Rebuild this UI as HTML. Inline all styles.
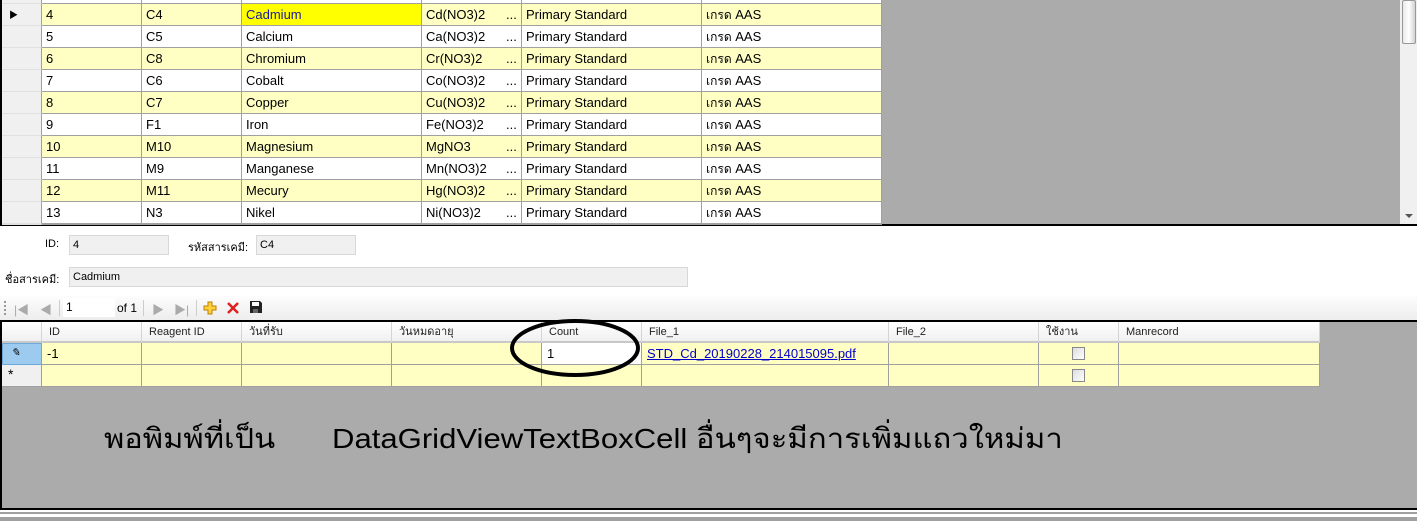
<!DOCTYPE html>
<html><head><meta charset="utf-8"><style>
*{margin:0;padding:0;box-sizing:border-box}
body{width:1417px;height:521px;position:relative;overflow:hidden;background:#fff;font-family:"Liberation Sans","Noto Sans CJK SC",sans-serif;font-size:13px;color:#000}
.a{position:absolute}
.c{position:absolute;border-right:1px solid #a0a0a0;border-bottom:1px solid #a0a0a0;padding-left:4px;line-height:21px;white-space:nowrap;overflow:hidden}
.y{background:#ffffc4}.w{background:#fff}
.rh{position:absolute;left:2px;width:40px;background:#f0f0f0;border-right:1px solid #a0a0a0;border-bottom:1px solid #e0e0e0}
.h{position:absolute;top:322px;height:21px;background:linear-gradient(#fff,#f0f0f0);border-right:1px solid #d5d5d5;border-bottom:2px solid #c8c8c8;font-size:11px;padding-left:7px;line-height:20px;color:#222}
.tb{position:absolute;background:#f0f0f0;border:1px solid #d8d8d8;height:20px;font-size:11px;padding:0 3px;line-height:18px}
.lb{position:absolute;font-size:11px}
.th{font-size:12px}
</style></head><body>
<div class="a" style="left:0;top:0;width:1417px;height:226px;background:#ababab;border-left:2px solid #000;border-bottom:2px solid #000"></div>
<div id="tg"></div>
<div class="a" style="left:1400px;top:0;width:17px;height:224px;background:#f0f0f0"></div>
<div class="a" style="left:1402px;top:0;width:14px;height:44px;background:linear-gradient(90deg,#e8e8e8,#fff,#d0d0d0);border:1px solid #999;border-radius:2px"></div>
<div class="a" style="left:1405px;top:214px;width:0;height:0;border-left:4px solid transparent;border-right:4px solid transparent;border-top:4px solid #555"></div>

<div class="lb" style="left:45px;top:238px">ID:</div>
<div class="tb" style="left:69px;top:235px;width:100px">4</div>
<div class="lb" style="left:188px;top:238px">รหัสสารเคมี:</div>
<div class="tb" style="left:256px;top:235px;width:100px">C4</div>
<div class="lb" style="left:5px;top:270px">ชื่อสารเคมี:</div>
<div class="tb" style="left:69px;top:267px;width:619px">Cadmium</div>

<div class="a" style="left:0;top:296px;width:1417px;height:25px;background:linear-gradient(#fdfdfd,#ececec)"></div>
<div class="a" style="left:4px;top:301px;width:2px;height:14px;border-left:2px dotted #999"></div>
<div class="a" style="left:14px;top:301px;color:#aaa;font-size:12px">|◀</div>
<div class="a" style="left:40px;top:301px;color:#aaa;font-size:12px">◀</div>
<div class="a" style="left:59px;top:300px;width:1px;height:16px;background:#ccc"></div>
<div class="a" style="left:63px;top:298px;width:52px;height:19px;background:#fff;padding:2px 3px;font-size:12px">1</div>
<div class="a" style="left:117px;top:301px;font-size:12px">of 1</div>
<div class="a" style="left:143px;top:300px;width:1px;height:16px;background:#ccc"></div>
<div class="a" style="left:152px;top:301px;color:#aaa;font-size:12px">▶</div>
<div class="a" style="left:174px;top:301px;color:#aaa;font-size:12px">▶|</div>
<div class="a" style="left:196px;top:300px;width:1px;height:16px;background:#ccc"></div>
<svg class="a" style="left:202px;top:300px" width="16" height="16"><path d="M6 2h4v4h4v4h-4v4h-4v-4h-4v-4h4z" fill="#ffd23a" stroke="#c08000"/></svg>
<svg class="a" style="left:225px;top:300px" width="16" height="16"><path d="M3 3l10 10M13 3L3 13" stroke="#e02020" stroke-width="2.5"/></svg>
<svg class="a" style="left:249px;top:300px" width="14" height="14"><path d="M1 1h10l2 2v10H1z" fill="#222"/><rect x="3" y="2" width="7" height="4" fill="#fff"/><rect x="4" y="9" width="5" height="4" fill="#666"/></svg>

<div class="a" style="left:0;top:320px;width:1417px;height:190px;background:#ababab;border-left:2px solid #000;border-top:2px solid #000;border-bottom:2px solid #000"></div>
<div class="a" style="left:2px;top:322px;width:40px;height:21px;background:linear-gradient(#fff,#f0f0f0);border-right:1px solid #d5d5d5;border-bottom:2px solid #c8c8c8"></div>
<div id="bg"></div>
<div class="a" style="left:0;top:512px;width:1417px;height:2px;background:#a0a0a0"></div>
<div class="a" style="left:0;top:517px;width:1417px;height:4px;background:#a0a0a0"></div>

<svg class="a" style="left:508px;top:318px" width="134" height="62"><ellipse cx="67" cy="30" rx="63" ry="27" fill="none" stroke="#000" stroke-width="4"/></svg>

<div class="a" style="left:104px;top:417px;font-size:28px;white-space:nowrap;transform:scaleX(1.1);transform-origin:0 0">พอพิมพ์ที่เป็น</div>
<div class="a" style="left:332px;top:417px;font-size:28px;white-space:nowrap;transform:scaleX(1.11);transform-origin:0 0">DataGridViewTextBoxCell อื่นๆจะมีการเพิ่มแถวใหม่มา</div>

<script>
var rows=[["3","","","","",""],["4","C4","Cadmium","Cd(NO3)2","Primary Standard","เกรด AAS"],["5","C5","Calcium","Ca(NO3)2","Primary Standard","เกรด AAS"],["6","C8","Chromium","Cr(NO3)2","Primary Standard","เกรด AAS"],["7","C6","Cobalt","Co(NO3)2","Primary Standard","เกรด AAS"],["8","C7","Copper","Cu(NO3)2","Primary Standard","เกรด AAS"],["9","F1","Iron","Fe(NO3)2","Primary Standard","เกรด AAS"],["10","M10","Magnesium","MgNO3","Primary Standard","เกรด AAS"],["11","M9","Manganese","Mn(NO3)2","Primary Standard","เกรด AAS"],["12","M11","Mecury","Hg(NO3)2","Primary Standard","เกรด AAS"],["13","N3","Nikel","Ni(NO3)2","Primary Standard","เกรด AAS"],["","","","","",""]];
var cx=[42,142,242,422,522,702,882],h="";
rows.forEach(function(r,i){var y=4+22*(i-1);var hh=22;if(i==rows.length-1)hh=224-y;
var cls=(i%2==1)?"y":"w";
h+='<div class="rh" style="top:'+y+'px;height:'+hh+'px">'+(i==1?'<span style="position:absolute;left:7px;top:4px;font-size:9px">▶</span>':'')+'</div>';
for(var j=0;j<6;j++){var bg=(i==1&&j==2)?'background:#ffff00;color:#1a1aa0;':'';
var t=r[j];if(j==3&&t)t='<span style="display:inline-block;width:80px">'+t+'</span>...';
if(j==5&&t)t='<span class="th">เกรด</span> AAS';
h+='<div class="c '+cls+'" style="'+bg+'left:'+cx[j]+'px;top:'+y+'px;width:'+(cx[j+1]-cx[j])+'px;height:'+hh+'px">'+t+'</div>';}
});
document.getElementById('tg').innerHTML=h;
var bx=[42,142,242,392,542,642,889,1039,1119,1320],hd=["ID","Reagent ID","วันที่รับ","วันหมดอายุ","Count","File_1","File_2","ใช้งาน","Manrecord"],g="";
for(var j=0;j<9;j++){g+='<div class="h" style="left:'+bx[j]+'px;width:'+(bx[j+1]-bx[j])+'px">'+hd[j]+'</div>';}
g+='<div class="a" style="left:2px;top:343px;width:40px;height:22px;background:#9ccbef;border:1px solid #6ea8d8;font-size:11px;padding:2px 8px;font-style:italic">✎</div>';
g+='<div class="a" style="left:2px;top:365px;width:40px;height:22px;background:#f0f0f0;border-right:1px solid #a0a0a0;border-bottom:1px solid #a0a0a0;font-size:14px;padding:1px 6px">*</div>';
for(var r=0;r<2;r++){for(var j=0;j<9;j++){var t="";var st="";
if(r==0&&j==0)t="-1";if(r==0&&j==4){t="1";st="background:#fff;";}
if(r==0&&j==5)t='<span style="color:#00c;text-decoration:underline">STD_Cd_20190228_214015095.pdf</span>';
if(j==7)t='<span style="display:inline-block;width:13px;height:13px;border:1px solid #888;background:linear-gradient(135deg,#ddd,#fff);margin:4px 0 0 28px"></span>';
g+='<div class="c y" style="'+st+'left:'+bx[j]+'px;top:'+(343+22*r)+'px;width:'+(bx[j+1]-bx[j])+'px;height:22px;padding-left:5px">'+t+'</div>';}}
document.getElementById('bg').innerHTML=g;
</script>
</body></html>
